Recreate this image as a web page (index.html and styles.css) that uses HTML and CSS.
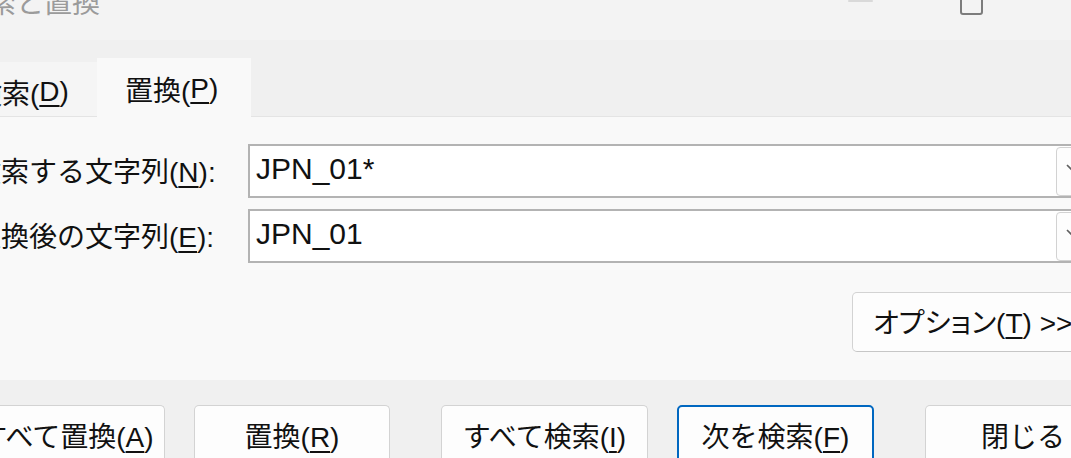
FILE: index.html
```html
<!DOCTYPE html>
<html lang="ja">
<head>
<meta charset="utf-8">
<title>検索と置換</title>
<link rel="stylesheet" href="styles.css">
</head>
<body>
<div class="titlebar">
  <span class="title">検索と置換</span>
  <div class="controls">
    <span class="min"></span>
    <span class="max"></span>
  </div>
</div>
<div class="tabstrip">
  <div class="tab">検索(<u>D</u>)</div>
  <div class="tab active">置換(<u>P</u>)</div>
</div>
<div class="panel">
  <div class="form">
    <label class="lbl">検索する文字列(<u>N</u>):</label>
    <div class="combo">
      <span class="val">JPN_01*</span>
      <span class="drop"><svg width="44" height="49" viewBox="0 0 44 49"><polyline points="11,18 17,24 23,18" fill="none" stroke="#606060" stroke-width="1.6"/></svg></span>
    </div>
    <label class="lbl">置換後の文字列(<u>E</u>):</label>
    <div class="combo">
      <span class="val">JPN_01</span>
      <span class="drop"><svg width="44" height="49" viewBox="0 0 44 49"><polyline points="11,18 17,24 23,18" fill="none" stroke="#606060" stroke-width="1.6"/></svg></span>
    </div>
  </div>
  <div class="opt-row">
    <button class="btn opt">オプション(<u>T</u>) &gt;&gt;</button>
  </div>
</div>
<div class="footer">
  <div class="group">
    <button class="btn w197">すべて置換(<u>A</u>)</button>
    <button class="btn w196">置換(<u>R</u>)</button>
  </div>
  <div class="group">
    <button class="btn w207">すべて検索(<u>I</u>)</button>
    <button class="btn w197 default">次を検索(<u>F</u>)</button>
  </div>
  <button class="btn w196">閉じる</button>
</div>
</body>
</html>
```

FILE: styles.css
```css
* { box-sizing: border-box; }
html, body {
  margin: 0;
  padding: 0;
}
body {
  width: 1071px;
  height: 458px;
  overflow: hidden;
  background: #f0f0f0;
  font-family: "Liberation Sans", "Noto Sans CJK JP", sans-serif;
  font-size: 28px;
  color: #111;
}
u { text-underline-offset: 4px; text-decoration-thickness: 1.5px; }

.titlebar {
  height: 40px;
  background: #f3f3f3;
  display: flex;
  align-items: flex-start;
  overflow: hidden;
}
.title {
  display: block;
  margin-left: -40px;
  margin-top: -10px;
  line-height: 28px;
  color: #9b9b9b;
  white-space: nowrap;
}
.controls {
  margin-left: auto;
  padding-right: 88px;
  display: flex;
  align-items: flex-start;
}
.min {
  display: block;
  width: 25px;
  height: 2px;
  background: #d9d9d9;
  border-radius: 1px;
}
.max {
  display: block;
  width: 23px;
  height: 23px;
  margin-top: -8px;
  margin-left: 87px;
  border: 2px solid #7c7c7c;
  border-radius: 3px;
}

.tabstrip {
  height: 77px;
  background: #f0f0f0;
  border-bottom: 1px solid #e4e4e4;
  display: flex;
  align-items: flex-end;
}
.tab {
  display: flex;
  align-items: center;
  white-space: nowrap;
  height: 54px;
  width: 147px;
  margin-left: -50px;
  padding-left: 24px;
  padding-top: 6px;
  background: #f5f5f5;
}
.tab.active {
  height: 59px;
  width: 154px;
  margin-left: 0;
  margin-bottom: -1px;
  padding-left: 28px;
  padding-top: 2px;
  background: #f9f9f9;
}

.panel {
  height: 263px;
  background: #f9f9f9;
  padding-top: 27px;
}
.form {
  margin-left: -27px;
  display: grid;
  grid-template-columns: 275px 860px;
  grid-auto-rows: 54px;
  row-gap: 11px;
  align-items: center;
}
.lbl {
  white-space: nowrap;
  padding-bottom: 2px;
}
.combo {
  height: 54px;
  background: #ffffff;
  border: 2px solid #b3b3b3;
  display: flex;
  align-items: center;
}
.val {
  padding-left: 6px;
  padding-bottom: 4px;
  font-size: 30px;
  color: #111;
}
.drop {
  margin-left: auto;
  margin-right: 6px;
  width: 44px;
  height: 49px;
  background: #fdfdfd;
  border: 1px solid #d2d2d2;
  border-radius: 4px;
  display: flex;
}
.drop svg { display: block; margin: -1px; }

.opt-row {
  margin-top: 29px;
  padding-left: 852px;
  display: flex;
}
.btn {
  font: inherit;
  color: #111;
  height: 60px;
  background: #fdfdfd;
  border: 1px solid #d3d3d3;
  border-bottom-color: #c6c6c6;
  border-radius: 5px;
  padding: 0;
  white-space: nowrap;
  flex: none;
}
.opt {
  width: 260px;
  text-align: left;
  padding-left: 20px;
  padding-bottom: 2px;
  font-feature-settings: "palt";
}

.footer {
  height: 78px;
  padding-top: 25px;
  margin-left: -32px;
  display: flex;
  gap: 51px;
}
.group {
  display: flex;
  gap: 29px;
}
.w196 { width: 196px; }
.w197 { width: 197px; }
.w207 { width: 207px; }
.default {
  border: 2px solid #0067c0;
}
```
